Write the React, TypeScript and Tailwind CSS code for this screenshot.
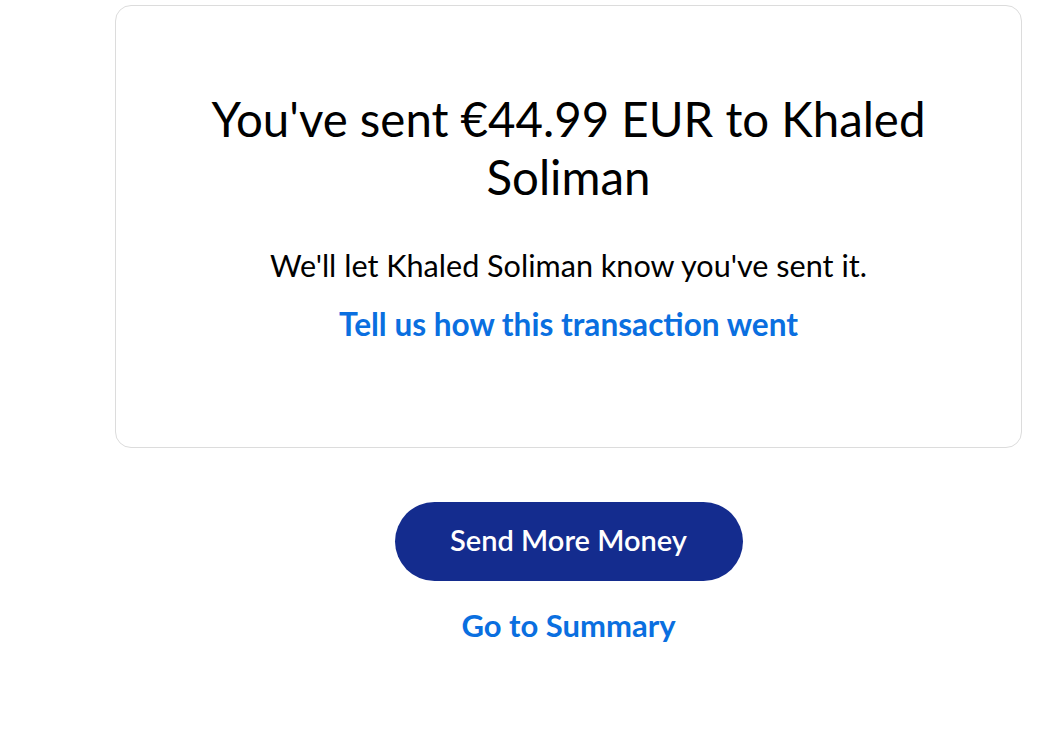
export default function App() {
  return (
    <div className="min-h-screen bg-white">
      <div className="pt-[5px] pl-[115px] pr-[22px] font-['Lato',sans-serif]">
        {/* Confirmation card */}
        <div className="flex h-[443px] flex-col items-center rounded-[16px] border border-[#dcdcdc] px-[60px] pt-[84px] text-center">
          <h1 className="text-[47.4px] leading-[58px] font-normal text-black">
            You've sent €44.99 EUR to Khaled Soliman
          </h1>
          <p className="mt-[42px] text-[30.6px] leading-[36px] text-black">
            We'll let Khaled Soliman know you've sent it.
          </p>
          <a href="#" className="mt-[22px] text-[31.6px] leading-[36px] font-bold text-[#0a6fe0]">
            Tell us how this transaction went
          </a>
        </div>

        {/* Actions */}
        <div className="flex flex-col items-center">
          <button className="mt-[54px] h-[79px] w-[348px] rounded-full bg-[#142c8e] pb-[3px] text-[29px] font-semibold text-white">
            Send More Money
          </button>
          <a href="#" className="mt-[26px] text-[31px] leading-[36px] font-bold text-[#0a6fe0]">
            Go to Summary
          </a>
        </div>
      </div>
    </div>
  );
}
